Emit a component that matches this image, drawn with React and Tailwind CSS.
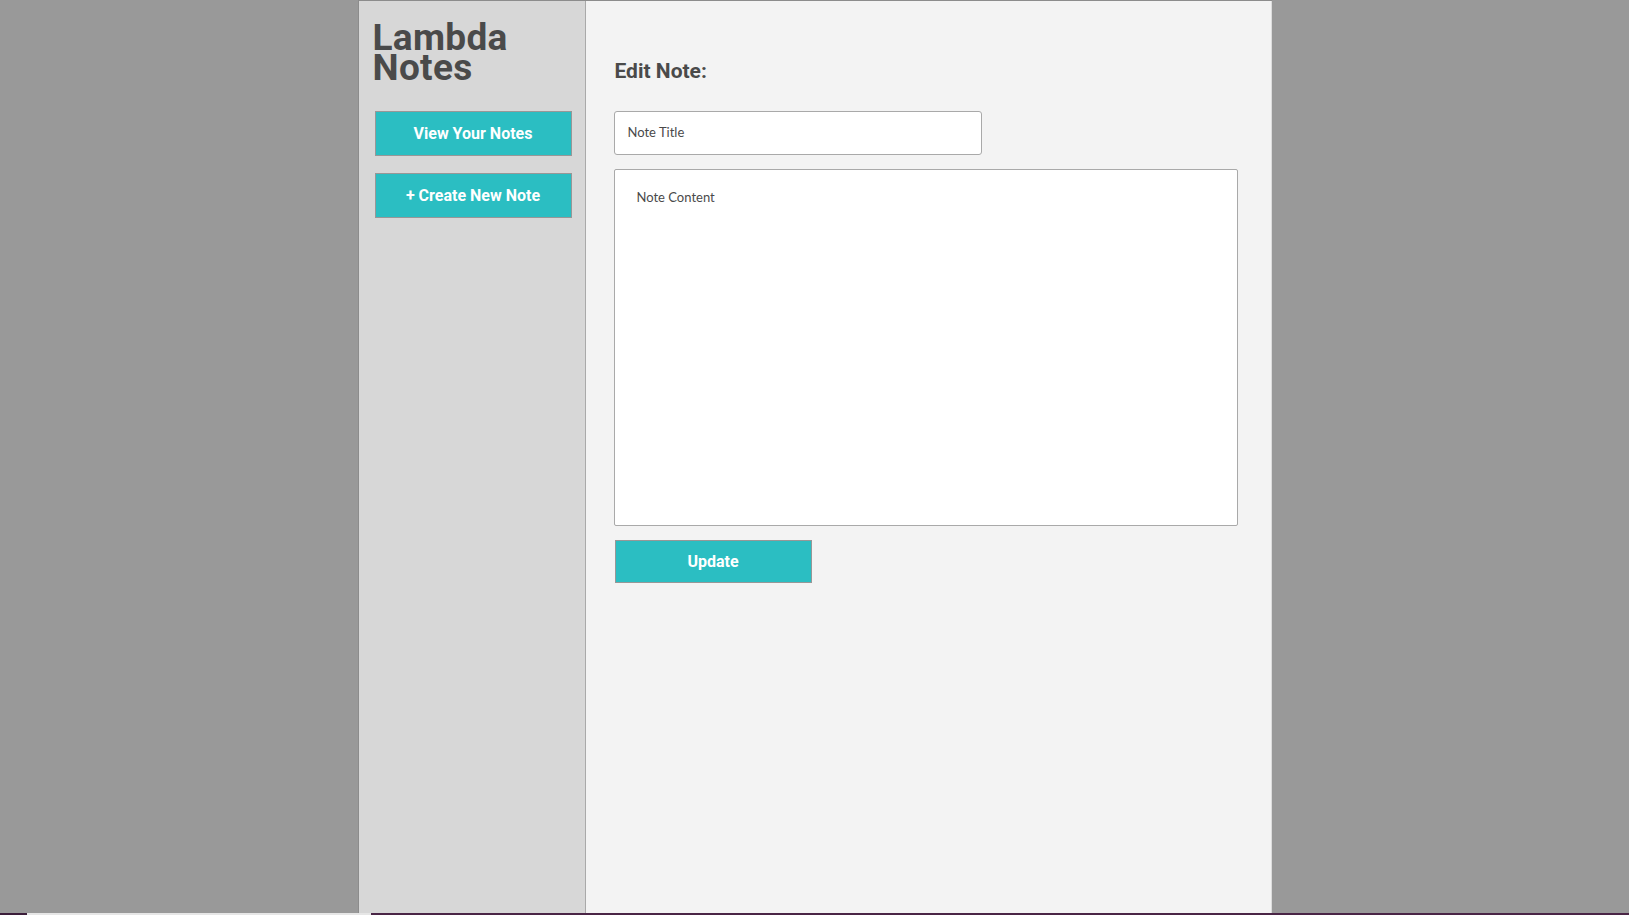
export default function App() {
  return (
    <div className="w-full h-[915px] flex flex-col bg-[#999999] overflow-hidden">
      <div className="flex-1 flex justify-center">
        <div className="w-[914px] h-full flex border-t border-l border-[#8c8c8c]">
          <aside
            className="w-[227px] h-full bg-[#d7d7d7] border-r border-[#a9a9a9] pl-[16px] pt-[22px]"
            style={{ fontFamily: "Roboto, 'Liberation Sans', sans-serif" }}
          >
            <h1 className="-ml-[2px] text-[37px] leading-[30px] font-bold text-[#4a4a4a] tracking-[0.3px]">
              Lambda
              <br />
              Notes
            </h1>
            <div className="mt-[28px] flex flex-col gap-[17px]">
              <button className="w-[197px] h-[45px] bg-[#2bbec2] border border-[#979797] text-white text-[16px] font-bold">
                View Your Notes
              </button>
              <button className="w-[197px] h-[45px] bg-[#2bbec2] border border-[#979797] text-white text-[16px] font-bold">
                + Create New Note
              </button>
            </div>
          </aside>
          <main className="flex-1 h-full bg-[#f3f3f3] border-r border-[#dcdcdc] pl-[28px] pt-[58px]">
            <h2
              className="ml-[1px] text-[21px] leading-[24px] font-bold text-[#4a4a4a]"
              style={{ fontFamily: "Roboto, 'Liberation Sans', sans-serif" }}
            >
              Edit Note:
            </h2>
            <div className="mt-[28px] flex flex-col items-start">
              <div className="w-[368px] h-[44px] bg-white border border-[#a9a9a9] rounded-[3px] flex items-center pl-[13px]">
                <span
                  className="text-[13px] text-[#4a4a4a]"
                  style={{ fontFamily: "Lato, 'Open Sans', sans-serif" }}
                >
                  Note Title
                </span>
              </div>
              <div className="mt-[14px] w-[624px] h-[357px] bg-white border border-[#a9a9a9] rounded-[2px] pl-[22px] pt-[14px]">
                <span
                  className="text-[13px] text-[#4a4a4a]"
                  style={{ fontFamily: "Lato, 'Open Sans', sans-serif" }}
                >
                  Note Content
                </span>
              </div>
              <button
                className="mt-[14px] ml-[1px] w-[197px] h-[43px] bg-[#2bbec2] border border-[#979797] text-white text-[16px] font-bold"
                style={{ fontFamily: "Roboto, 'Liberation Sans', sans-serif" }}
              >
                Update
              </button>
            </div>
          </main>
        </div>
      </div>
      <div className="h-[2px] flex">
        <div className="w-[27px] bg-[#3b1d3a]" />
        <div className="w-[344px] bg-[#e6e6e6]" />
        <div className="flex-1 bg-[#4a2546]" />
      </div>
    </div>
  );
}
